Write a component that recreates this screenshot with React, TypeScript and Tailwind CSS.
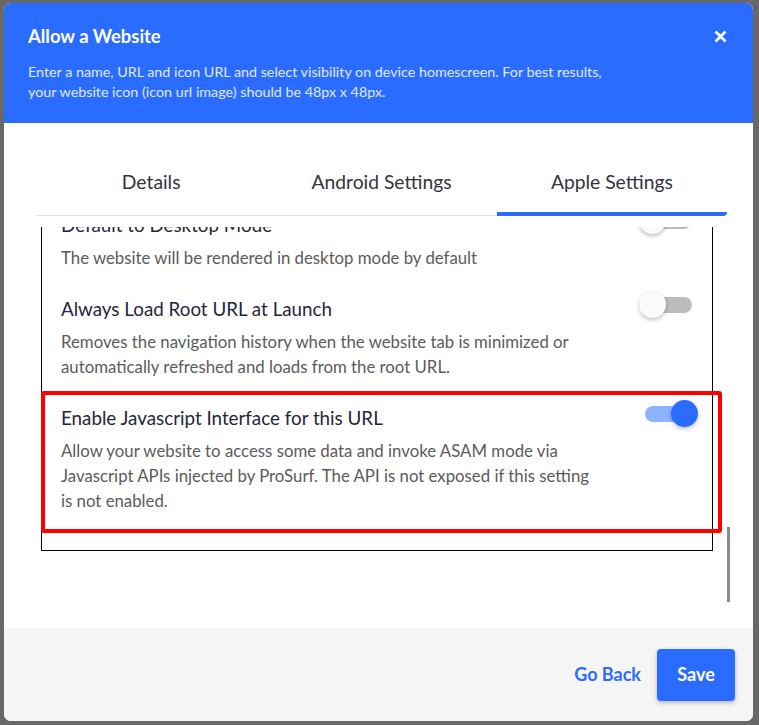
import { useState } from 'react';

type Row = {
  title: string;
  desc: string;
  on: boolean;
  highlight?: boolean;
};

const rows: Row[] = [
  {
    title: 'Default to Desktop Mode',
    desc: 'The website will be rendered in desktop mode by default',
    on: false,
  },
  {
    title: 'Always Load Root URL at Launch',
    desc: 'Removes the navigation history when the website tab is minimized or automatically refreshed and loads from the root URL.',
    on: false,
  },
  {
    title: 'Enable Javascript Interface for this URL',
    desc: 'Allow your website to access some data and invoke ASAM mode via Javascript APIs injected by ProSurf. The API is not exposed if this setting is not enabled.',
    on: true,
    highlight: true,
  },
];

function Toggle({ on }: { on: boolean }) {
  return (
    <div className="relative w-[59px] h-[27px] shrink-0 flex items-center justify-center">
      <div
        className={`w-[47px] h-[16px] rounded-full ${on ? 'bg-[#8db2ff]' : 'bg-[#bcbcbc]'}`}
      />
      <div
        className={`absolute top-0 w-[27px] h-[27px] rounded-full shadow-[0_2px_4px_rgba(0,0,0,0.25)] ${
          on ? 'right-0 bg-[#2a6cff]' : 'left-0 bg-[#fafafa]'
        }`}
      />
    </div>
  );
}

function SettingRow({ row }: { row: Row }) {
  return (
    <div className="relative flex items-start pl-[19px] pr-[14px] pt-[13px] pb-[13px]">
      <div className="w-[532px]">
        <p className="text-[18.8px] leading-[26px] text-[#26263a]">{row.title}</p>
        <p className="mt-[7px] text-[16.8px] leading-[25px] text-[#5b5b5b]">{row.desc}</p>
      </div>
      <div className="ml-auto -mt-[5px]">
        <Toggle on={row.on} />
      </div>
      {row.highlight && (
        <div className="absolute -left-px -top-px -right-[10px] -bottom-[7px] border-4 border-[#ff0000] rounded-[3px] pointer-events-none" />
      )}
    </div>
  );
}

export default function App() {
  const [tab, setTab] = useState(2);
  const tabs = ['Details', 'Android Settings', 'Apple Settings'];

  return (
    <div
      className="w-[759px] h-[725px] overflow-hidden bg-[#686868] pt-[3px] pl-[4px]"
      style={{ fontFamily: 'Lato, "Noto Sans", sans-serif' }}
    >
      <div className="w-[749px] h-[718px] bg-white rounded-[7px] overflow-hidden flex flex-col">
        {/* header */}
        <div className="h-[120px] shrink-0 bg-[#2a6cff] pl-6 pr-[26px] pt-[21px]">
          <div className="flex items-start justify-between">
            <h2 className="text-[18.4px] leading-6 font-bold text-white">Allow a Website</h2>
            <button className="mt-[6px] text-white">
              <svg width="13" height="13" viewBox="0 0 13 13" fill="none">
                <path d="M1.5 1.5L11.5 11.5M11.5 1.5L1.5 11.5" stroke="white" strokeWidth="2.6" />
              </svg>
            </button>
          </div>
          <p className="mt-[14px] w-[595px] text-[14.3px] leading-5 text-white/85">
            Enter a name, URL and icon URL and select visibility on device homescreen. For best results,
            your website icon (icon url image) should be 48px x 48px.
          </p>
        </div>

        {/* tabs */}
        <div className="mt-[45px] ml-8 mr-[26px] flex shrink-0">
          {tabs.map((t, i) => (
            <button key={t} onClick={() => setTab(i)} className="flex-1 flex flex-col">
              <span className="h-7 leading-7 text-[19.3px] text-[#333340] text-center">{t}</span>
              {tab === i ? (
                <div className="mt-4 h-1 bg-[#2a6cff] rounded-br-md" />
              ) : (
                <div className="mt-4 h-1 border-b border-[#e2e2e2]" />
              )}
            </button>
          ))}
        </div>

        {/* scrolled settings */}
        <div className="mt-[11px] flex-1 flex items-start overflow-hidden pl-[37px]">
          <div className="-mt-[29px] w-[672px] shrink-0 border border-black pb-6">
            {rows.map((r) => (
              <SettingRow key={r.title} row={r} />
            ))}
          </div>
          <div className="ml-[14px] w-[3px] pt-[300px]">
            <div className="h-[75px] bg-[#8a8a8a]" />
          </div>
        </div>

        {/* footer */}
        <div className="h-[93px] shrink-0 bg-[#f5f5f5] flex items-center justify-end gap-4 pr-[18px]">
          <button className="text-[18px] font-bold text-[#2a6cff]">Go Back</button>
          <button className="w-[78px] h-[52px] rounded bg-[#2a6cff] text-white text-[18px] font-bold shadow-[0_2px_4px_rgba(0,0,0,0.25)]">
            Save
          </button>
        </div>
      </div>
    </div>
  );
}
